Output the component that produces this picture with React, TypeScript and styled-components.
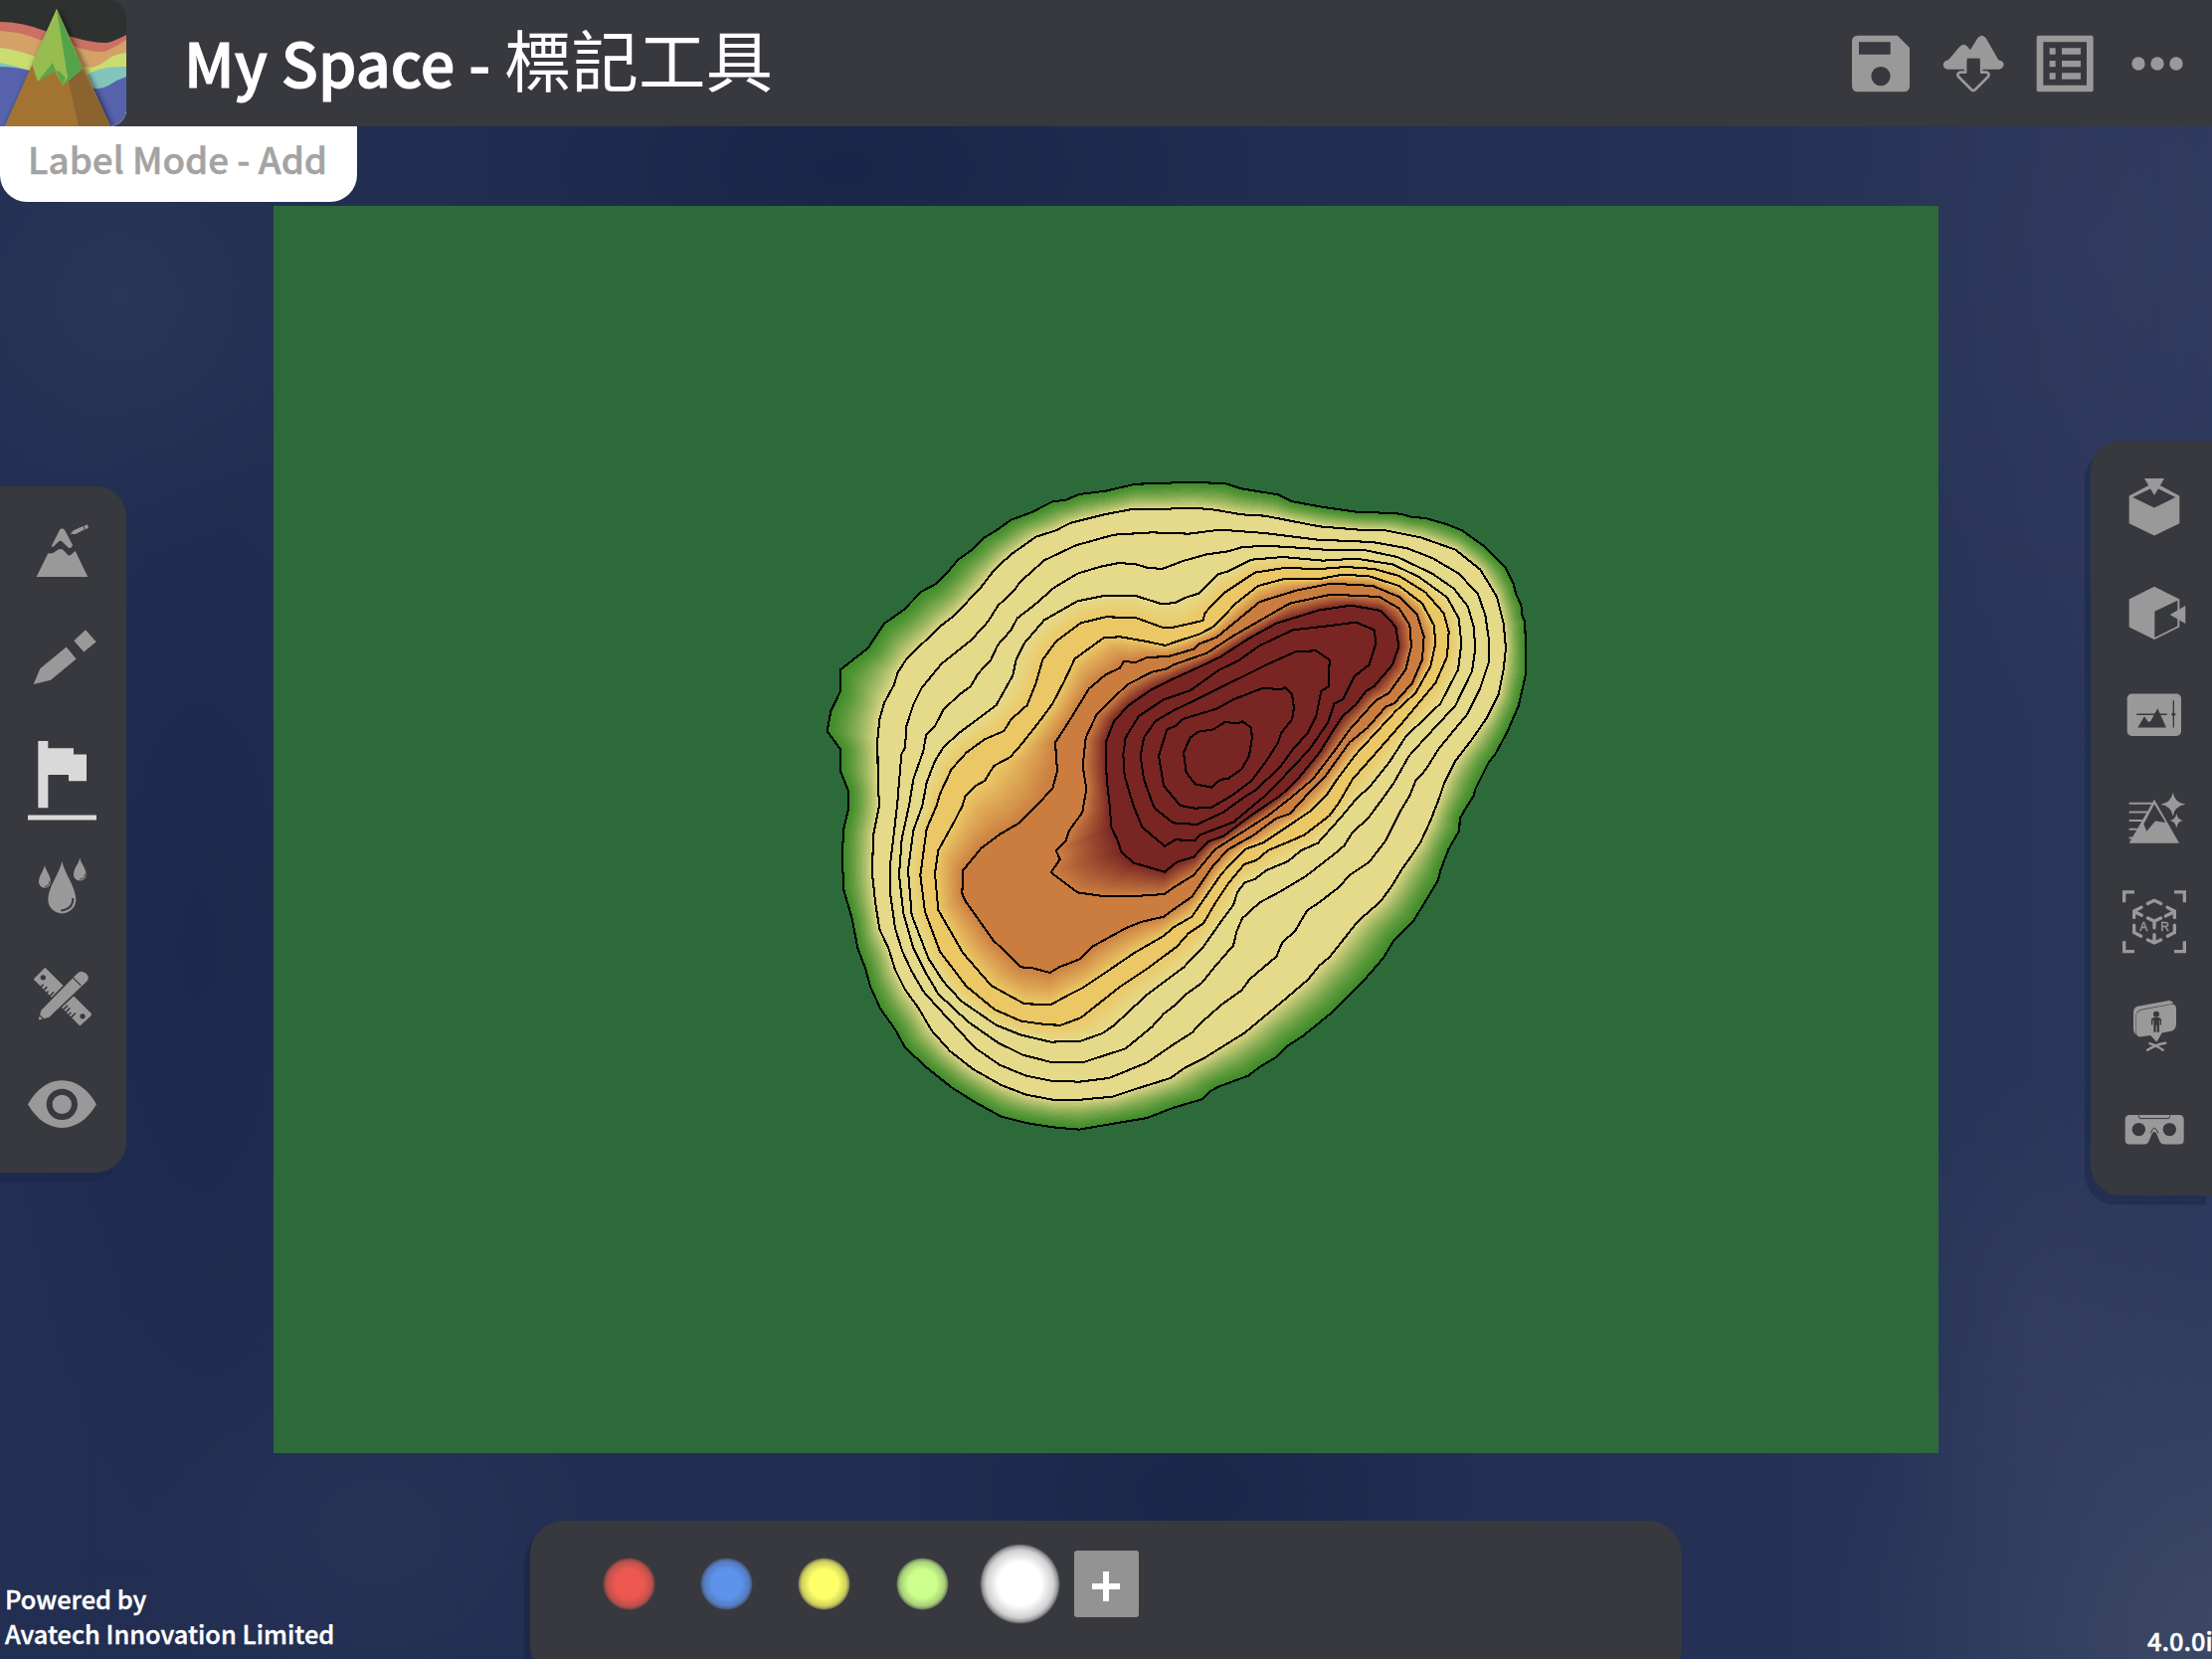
import React from "react";
import styled, { createGlobalStyle, css } from "styled-components";

const Global = createGlobalStyle`
  *, *::before, *::after { box-sizing: border-box; }
  html, body { margin: 0; padding: 0; overflow: hidden; }
  body { font-family: "Noto Sans CJK TC", "Noto Sans CJK SC", "Noto Sans", sans-serif; }
`;

const PANEL = "#38393e";
const ICON = "#999999";

const Screen = styled.div`
  position: relative;
  width: 2224px;
  height: 1668px;
  overflow: hidden;
  display: flex;
  flex-direction: column;
  background:
    radial-gradient(ellipse 200px 240px at 2050px 1320px, rgba(66, 76, 106, 0.3), transparent),
    radial-gradient(ellipse 420px 380px at 2224px 1640px, rgba(72, 84, 108, 0.55), transparent),
    radial-gradient(ellipse 300px 500px at 2120px 250px, rgba(52, 62, 98, 0.5), transparent),
    radial-gradient(ellipse 260px 260px at 120px 300px, rgba(50, 62, 92, 0.5), transparent),
    radial-gradient(ellipse 240px 200px at 380px 1540px, rgba(46, 58, 90, 0.5), transparent),
    radial-gradient(ellipse 200px 600px at 200px 950px, rgba(24, 36, 70, 0.5), transparent),
    radial-gradient(ellipse 420px 220px at 850px 170px, rgba(22, 34, 68, 0.7), transparent),
    radial-gradient(ellipse 300px 180px at 1200px 1500px, rgba(22, 34, 68, 0.6), transparent),
    linear-gradient(90deg, #222e52 0%, #212d50 55%, #263256 85%, #2d395c 100%);
`;

const Header = styled.header`
  flex: none;
  height: 127px;
  display: flex;
  align-items: center;
  background: ${PANEL};
  padding-right: 23px;
`;

const Logo = styled.svg`
  flex: none;
  width: 127px;
  height: 127px;
  border-radius: 0 17px 17px 0;
`;

const Title = styled.h1`
  flex: 1;
  display: flex;
  align-items: baseline;
  margin: 0 0 0 58px;
  font-size: 61px;
  height: 127px;
  line-height: 123px;
  font-weight: 500;
  color: #fff;
  white-space: pre;
  -webkit-text-stroke: 1.1px #fff;
  letter-spacing: 0.1px;
`;

const TitleCjk = styled.span`
  position: relative;
  top: -1px;
  font-size: 67.5px;
  font-weight: 400;
  line-height: 1;
  letter-spacing: 0;
  -webkit-text-stroke: 0;
`;

const Tools = styled.nav`
  display: flex;
  align-items: center;
  gap: 28.6px;
`;

const ToolButton = styled.button`
  border: 0;
  padding: 0;
  background: none;
  width: 64px;
  height: 64px;
  color: ${ICON};
  --hole: ${PANEL};
  svg { display: block; width: 100%; height: 100%; }
`;

const ModeChip = styled.div`
  position: absolute;
  left: 0;
  top: 127px;
  width: 359px;
  height: 76px;
  border-radius: 0 0 27px 27px;
  background: #fff;
  color: #a3a3a3;
  font-size: 36.8px;
  font-weight: 500;
  line-height: 65px;
  padding-left: 28px;
  white-space: nowrap;
  -webkit-text-stroke: 0.5px #a3a3a3;
`;

const Workspace = styled.main`
  flex: 1;
  min-height: 0;
  display: flex;
  justify-content: space-between;
  align-items: flex-start;
`;

const SidePanel = styled.aside<{ $side: "left" | "right" }>`
  flex: none;
  display: flex;
  flex-direction: column;
  background: ${PANEL};
  ${(p) =>
    p.$side === "left"
      ? css`
          width: 127px;
          height: 690px;
          margin-top: 362px;
          padding: 9px 0 0 28px;
          border-radius: 0 31px 31px 0;
          box-shadow: -6px 9px 1px 0 rgba(26, 38, 72, 0.5);
        `
      : css`
          width: 122px;
          height: 759px;
          margin-top: 316px;
          padding: 13.75px 0 0 32px;
          border-radius: 31px 0 0 31px;
          box-shadow: -6px 9px 1px 0 rgba(26, 38, 72, 0.5);
        `}
`;

const PanelItem = styled.button<{ $w: number; $h: number; $active?: boolean }>`
  flex: none;
  border: 0;
  padding: 0;
  background: none;
  width: ${(p) => p.$w}px;
  height: ${(p) => p.$h}px;
  color: ${(p) => (p.$active ? "#d9d9d9" : ICON)};
  --hole: ${PANEL};
  svg { display: block; width: 100%; height: 100%; }
`;

const MapCanvas = styled.section`
  flex: none;
  width: 1674px;
  height: 1254px;
  margin-top: 80px;
  background: #2c6a3a;
  margin-left: 148px;
  margin-right: 153px;
  svg { display: block; width: 1674px; height: 1254px; }
`;

const Palette = styled.div`
  position: absolute;
  left: 533px;
  top: 1529px;
  width: 1158px;
  height: 160px;
  border-radius: 34px;
  background: ${PANEL};
  box-shadow: -6px 9px 1px 0 rgba(26, 36, 66, 0.6);
  display: flex;
  align-items: center;
  padding: 0 0 33px 50px;
`;

const Slot = styled.div`
  width: 98.3px;
  display: flex;
  justify-content: center;
`;

const Swatch = styled.button<{ $c: string; $big?: boolean }>`
  border: 0;
  padding: 0;
  width: ${(p) => (p.$big ? 81 : 53)}px;
  height: ${(p) => (p.$big ? 81 : 53)}px;
  border-radius: 50%;
  flex: none;
  background: radial-gradient(
    circle closest-side,
    ${(p) => p.$c} 0,
    ${(p) => p.$c} 54%,
    color-mix(in srgb, ${(p) => p.$c} 76%, ${PANEL}) 84%,
    color-mix(in srgb, ${(p) => p.$c} 45%, ${PANEL}) 94%,
    ${PANEL} 100%
  );
`;

const AddButton = styled.button`
  flex: none;
  margin-left: 5.5px;
  width: 65px;
  height: 67px;
  border: 0;
  border-radius: 3px;
  padding: 4px 0 0;
  background: #939393;
  display: flex;
  align-items: center;
  justify-content: center;
  svg { width: 28px; height: 30px; display: block; }
`;

const Credits = styled.footer`
  position: absolute;
  left: 5px;
  top: 1590px;
  color: #fff;
  font-size: 25.4px;
  font-weight: 500;
  line-height: 35px;
  white-space: nowrap;
  -webkit-text-stroke: 0.4px #fff;
`;

const Version = styled.div`
  position: absolute;
  left: 2159px;
  top: 1632px;
  color: #fff;
  font-size: 25.4px;
  font-weight: 500;
  line-height: 35px;
  white-space: nowrap;
  -webkit-text-stroke: 0.4px #fff;
`;

/* Contour rings from the shoreline to the summit, in thirds of a pixel. */
const RINGS: string[] = [
  "75,610 158,545 207,471 265,430 320,374 365,350 395,320 430,278 475,246 505,214 545,190 590,158 650,136 715,103 755,98 795,81 875,71 965,50 1050,48 1110,44 1235,48 1285,64 1395,82 1435,102 1520,118 1630,134 1690,136 1765,140 1795,149 1840,153 1900,170 1950,190 2020,240 2080,300 2105,350 2112,380 2128,415 2132,450 2140,465 2143,620 2120,720 2085,800 2050,865 2030,890 1990,970 1985,990 1960,1030 1943,1060 1942,1095 1910,1150 1885,1215 1878,1245 1845,1300 1802,1370 1745,1425 1712,1480 1650,1552 1550,1650 1470,1715 1420,1747 1390,1778 1340,1808 1305,1835 1215,1868 1190,1882 1165,1906 1080,1931 1000,1962 870,1984 795,1997 715,1990 640,1978 560,1958 480,1914 410,1870 335,1810 270,1750 240,1695 195,1632 165,1565 150,1510 127,1450 110,1360 85,1275 80,1170 85,1090 99,1030 99,975 75,915 75,850 35,795 46,735 75,675",
  "192,1020 188,940 187,820 193,760 207,710 237,655 248,618 275,577 375,480 420,445 500,360 540,308 590,262 665,209 725,190 770,167 870,142 960,125 1060,125 1140,122 1205,128 1285,142 1355,146 1520,178 1640,188 1720,190 1825,211 1930,248 2005,308 2055,390 2075,470 2082,545 2075,610 2060,685 2025,755 1980,820 1930,885 1895,955 1882,995 1855,1065 1825,1130 1795,1175 1770,1210 1740,1260 1705,1308 1635,1370 1550,1477 1520,1502 1485,1545 1415,1605 1295,1705 1170,1783 1115,1810 1070,1842 965,1875 895,1898 800,1907 715,1907 635,1892 560,1863 475,1815 405,1760 350,1698 310,1630 270,1575 240,1515 220,1450 193,1393 180,1310 171,1225 174,1110",
  "251,960 259,865 270,845 274,780 295,715 320,665 380,592 470,520 520,465 550,417 600,370 615,347 690,280 785,235 900,203 1015,196 1125,200 1220,188 1355,198 1515,218 1680,225 1785,244 1860,273 1940,320 1998,382 2020,445 2031,520 2030,590 2005,665 1965,745 1880,848 1840,912 1810,945 1792,990 1765,1035 1720,1125 1670,1190 1610,1230 1580,1265 1515,1315 1483,1336 1445,1400 1408,1432 1390,1475 1310,1543 1285,1577 1225,1620 1165,1673 1135,1705 1080,1740 1000,1795 885,1842 795,1853 710,1850 635,1835 555,1802 480,1750 425,1690 365,1625 325,1580 290,1520 262,1460 240,1390 226,1290 226,1190 238,1090 247,1010",
  "282,1020 295,940 325,855 333,808 360,780 385,732 430,688 468,660 490,622 528,582 550,535 590,490 608,455 660,415 720,362 790,320 860,299 915,288 965,292 1000,302 1045,306 1080,293 1105,283 1180,262 1245,253 1285,241 1340,237 1415,239 1535,248 1660,250 1755,270 1860,320 1925,365 1968,420 1985,480 1990,545 1980,615 1930,718 1840,815 1790,870 1745,950 1717,990 1665,1060 1620,1100 1595,1140 1570,1162 1480,1232 1400,1280 1340,1312 1287,1360 1270,1400 1260,1442 1225,1482 1205,1505 1165,1555 1120,1587 1080,1625 1050,1648 1015,1687 935,1753 805,1795 715,1795 625,1772 550,1735 460,1672 370,1588 330,1520 295,1450 265,1345 252,1230 260,1120",
  "322,1020 335,950 360,885 385,845 430,803 545,717 595,627 605,580 630,530 690,460 790,403 875,386 965,387 1045,412 1085,408 1115,393 1155,380 1215,322 1245,313 1315,278 1410,270 1530,281 1630,275 1740,292 1820,330 1905,392 1940,455 1948,530 1938,610 1885,712 1780,812 1730,890 1670,965 1635,995 1585,1055 1515,1133 1465,1155 1425,1188 1360,1215 1325,1242 1295,1252 1273,1280 1260,1320 1230,1360 1170,1445 1110,1508 1080,1530 1000,1590 900,1683 865,1707 800,1730 710,1733 620,1712 545,1682 440,1610 385,1550 340,1480 290,1350 279,1215 295,1095",
  "365,1020 375,985 410,910 455,860 510,820 568,795 590,760 638,717 665,650 685,580 725,525 800,469 875,451 965,453 1045,482 1080,482 1168,462 1175,438 1230,380 1325,317 1420,302 1510,307 1600,300 1685,306 1760,327 1840,377 1895,440 1910,495 1905,570 1870,650 1770,770 1700,850 1620,940 1578,1012 1550,1050 1475,1108 1430,1128 1365,1155 1330,1185 1293,1197 1245,1255 1205,1315 1170,1375 1125,1405 1090,1445 1000,1512 920,1565 800,1660 740,1682 700,1681 620,1670 540,1635 455,1565 375,1460 330,1340 316,1230 335,1090",
  "443,1020 452,990 480,962 510,945 538,900 588,873 625,830 680,760 715,712 750,645 782,577 870,513 920,511 1000,525 1055,537 1080,528 1160,502 1200,480 1270,408 1335,357 1410,337 1515,337 1590,323 1670,328 1760,357 1830,410 1865,475 1870,530 1855,600 1810,680 1750,735 1630,865 1570,945 1540,990 1495,1035 1410,1092 1350,1132 1295,1152 1225,1225 1180,1290 1135,1355 1080,1387 1050,1413 960,1465 865,1530 805,1570 765,1590 710,1620 630,1618 530,1563 445,1465 370,1335 360,1225 370,1155 420,1065",
  "668,1018 715,968 729,915 723,830 765,765 825,667 875,625 918,605 930,585 965,588 1000,573 1065,570 1140,548 1155,533 1210,512 1340,405 1450,371 1555,350 1680,357 1760,390 1815,445 1835,510 1830,580 1800,650 1745,712 1720,722 1665,785 1610,830 1535,935 1500,968 1430,1045 1390,1058 1320,1110 1245,1152 1200,1200 1135,1295 1080,1333 1050,1355 985,1370 935,1390 835,1445 797,1483 735,1507 707,1524 655,1510 620,1507 535,1425 450,1305 442,1285 445,1215 500,1148 555,1107 615,1072",
  "808,1020 817,970 806,900 815,815 848,745 940,655 1015,617 1060,607 1080,595 1180,560 1260,508 1430,410 1555,383 1700,390 1760,425 1792,475 1797,540 1780,610 1730,680 1690,703 1610,792 1565,855 1500,940 1435,995 1365,1050 1295,1095 1205,1152 1140,1230 1080,1267 1052,1287 965,1293 860,1292 790,1282 710,1222 737,1182 725,1155 755,1125 765,1095 805,1040",
  "887,1018 878,940 875,830 900,765 945,717 1010,672 1080,637 1140,610 1220,572 1305,517 1390,470 1520,430 1615,416 1705,432 1750,480 1759,540 1740,595 1685,660 1660,675 1630,715 1590,750 1560,795 1520,860 1450,945 1402,990 1320,1045 1230,1112 1185,1128 1140,1175 1090,1190 1053,1220 960,1193 922,1160 913,1130 892,1085",
  "958,1018 932,930 928,865 935,815 975,750 1050,700 1130,673 1215,612 1275,583 1340,537 1440,490 1545,478 1630,467 1685,490 1690,530 1670,595 1625,630 1590,700 1565,712 1545,770 1490,850 1410,935 1350,995 1260,1070 1160,1108 1145,1125 1085,1123 1053,1142 985,1085",
  "1018,1018 990,940 980,870 990,815 1025,765 1080,733 1165,692 1360,595 1450,555 1510,553 1550,580 1548,660 1525,675 1510,750 1485,800 1440,850 1400,905 1325,975 1295,993 1230,1040 1150,1077 1078,1072 1025,1030",
  "1100,1020 1050,960 1035,870 1060,790 1085,780 1110,758 1210,728 1260,700 1350,665 1405,670 1417,663 1437,685 1443,725 1437,760 1405,800 1395,830 1360,885 1315,945 1255,990 1195,1025 1145,1028",
  "1110,860 1130,815 1155,797 1200,790 1235,768 1275,772 1287,766 1315,785 1316,820 1308,870 1285,910 1245,938 1220,942 1195,965 1145,955 1118,920",
];

type Pt = [number, number];
type Rgb = [number, number, number];

const parse = (s: string): Pt[] => s.split(" ").map((p) => p.split(",").map(Number) as Pt);

const densify = (pts: Pt[], step: number): Pt[] =>
  pts.flatMap((p, i) => {
    const q = pts[(i + 1) % pts.length];
    const n = Math.max(1, Math.round(Math.hypot(q[0] - p[0], q[1] - p[1]) / step));
    return Array.from({ length: n }, (_, k): Pt => [
      p[0] + ((q[0] - p[0]) * k) / n,
      p[1] + ((q[1] - p[1]) * k) / n,
    ]);
  });

const nearest = (p: Pt, pts: Pt[]): Pt =>
  pts.reduce((best, q) =>
    Math.hypot(q[0] - p[0], q[1] - p[1]) < Math.hypot(best[0] - p[0], best[1] - p[1]) ? q : best
  );

const join = (pts: Pt[]) => pts.map((p) => `${p[0].toFixed(1)},${p[1].toFixed(1)}`).join(" ");

const GREEN: Rgb = [64, 140, 43];
const CREAM: Rgb = [229, 217, 138];
const GOLD: Rgb = [235, 199, 101];
const ORANGE: Rgb = [203, 125, 64];
const MAROON: Rgb = [120, 37, 35];

const BANDS: { outer: number; inner: number; from: Rgb; to: Rgb; ease: number }[] = [
  { outer: 0, inner: 1, from: GREEN, to: CREAM, ease: 1.35 },
  { outer: 4, inner: 5, from: CREAM, to: GOLD, ease: 1 },
  { outer: 6, inner: 7, from: GOLD, to: ORANGE, ease: 1 },
  { outer: 8, inner: 9, from: ORANGE, to: MAROON, ease: 1 },
];

const STEPS = 24;

const FILLS = BANDS.flatMap(({ outer, inner, from, to, ease }) => {
  const a = densify(parse(RINGS[outer]), 16);
  const b = densify(parse(RINGS[inner]), 8);
  const target = a.map((p) => nearest(p, b));
  const shades = Array.from({ length: STEPS }, (_, k) => {
    const t = k / STEPS;
    const pts = a.map((p, i): Pt => [
      p[0] + (target[i][0] - p[0]) * t,
      p[1] + (target[i][1] - p[1]) * t,
    ]);
    const c = from.map((v, i) => Math.round(v + (to[i] - v) * Math.pow(t, ease)));
    return { points: join(pts), fill: `rgb(${c.join(",")})` };
  });
  return [...shades, { points: RINGS[inner], fill: `rgb(${to.join(",")})` }];
});

const Terrain = () => (
  <svg viewBox="0 0 1674 1254">
    <g transform="translate(545 263) scale(0.33333)" shapeRendering="crispEdges">
      {FILLS.map((f, i) => (
        <polygon key={i} points={f.points} fill={f.fill} />
      ))}
      {RINGS.map((r, i) => (
        <polygon key={i} points={r} fill="none" stroke="#000" strokeWidth="6.2" strokeLinejoin="round" />
      ))}
    </g>
  </svg>
);

const AppLogo = () => (
  <Logo viewBox="0 0 127 127">
    <defs>
      <filter id="peak" x="-20%" y="-10%" width="150%" height="120%">
        <feDropShadow dx="2" dy="1" stdDeviation="3" floodOpacity="0.6" />
      </filter>
    </defs>
    <rect width="127" height="127" fill="#2f3130" />
    <path d="M0 22 Q22 22 45 31 L72 37 Q92 43 107 43 Q114 42 127 35 V127 H0Z" fill="#cb7062" />
    <path d="M0 31 Q22 32 40 40 L72 45 Q90 53 105 52 Q115 48 127 40 V127 H0Z" fill="#d4a267" />
    <path d="M0 48 Q14 49 36 57 L85 67 Q95 70 105 62 Q114 54 127 53 V127 H0Z" fill="#cbdc70" />
    <path d="M0 63 Q15 66 30 71 L86 77 Q98 66 127 67 V127 H0Z" fill="#83c4bc" />
    <path d="M0 67 Q15 67 30 71 L90 88 Q101 91 109 86 Q118 80 127 77 V127 H0Z" fill="#5663ac" />
    <path d="M57 9 L111 127 H5Z" fill="#a37332" filter="url(#peak)" />
    <path d="M57 9 L82 70 L111 127 H5 L33 64Z" fill="#a37332" />
    <path d="M68 78 L83 69 L111 127 H79Z" fill="#8b632f" />
    <path d="M57 9 L83 69 L63 86 L55 71 L38 82 L32 64Z" fill="#97bc50" />
    <path d="M57 9 L83 69 L63 86 L68 78Z" fill="#54a34b" />
    <path d="M53 63 L38 82 L56 71Z M56 71 L63 86 L66 78 L60 72Z" fill="#54a34b" opacity="0.9" />
  </Logo>
);

const SaveIcon = () => (
  <svg viewBox="57 94 192 192" fill="currentColor">
    <path
      fillRule="evenodd"
      d="M84 105 H203 L240 142 V257 Q240 275 222 275 H84 Q66 275 66 257 V123 Q66 105 84 105Z M87 125 V162 H182 V125Z M153 199 A29 29 0 1 0 153 257 A29 29 0 1 0 153 199Z"
    />
  </svg>
);

const TerrainDownIcon = () => (
  <svg viewBox="334 94 192 192">
    <path
      fill="currentColor"
      d="M339 193 Q341 181 355 179 L388 140 Q400 126 412 138 L421 149 L443 113 Q456 97 468 113 L506 179 Q522 182 522 193 Q520 205 508 207 H352 Q340 205 339 193Z"
    />
    <path
      fill="var(--hole)"
      stroke="currentColor"
      strokeWidth="8"
      strokeLinejoin="round"
      d="M407 176 H454 V216 H469 Q481 219 475 229 L436 268 Q430 274 424 268 L385 229 Q379 219 391 216 H407Z"
    />
    <path fill="var(--hole)" d="M411 174 H450 V222 H411Z" />
  </svg>
);

const ListIcon = () => (
  <svg viewBox="613 94 192 192" fill="currentColor">
    <path
      fillRule="evenodd"
      d="M630 105 H789 Q795 105 795 111 V269 Q795 275 789 275 H630 Q624 275 624 269 V111 Q624 105 630 105Z M644 125 V255 H775 V125Z"
    />
    <path d="M663 143h18v19h-18z M700 143h57v19h-57z M663 181h18v19h-18z M700 181h57v19h-57z M663 218h18v19h-18z M700 218h57v19h-57z" />
  </svg>
);

const DotsIcon = () => (
  <svg viewBox="891 94 192 192" fill="currentColor">
    <circle cx="930" cy="190" r="20" />
    <circle cx="987" cy="190" r="20" />
    <circle cx="1044" cy="190" r="20" />
  </svg>
);

const SculptIcon = () => (
  <svg viewBox="84 54 210 333.6" fill="currentColor">
    <path d="M155 208 L180 158 Q187 149 195 158 L219 204 Q217 214 207 213 L186 192 Q180 190 175 195 L164 206 Q160 211 155 208Z" />
    <path d="M110 300 L145 229 Q158 232 169 222 Q180 212 190 218 L204 233 Q210 238 216 232 L227 222 L265 300Z" />
    <path d="M212 170 L222 160 L250 147 L255 157 L228 171Z M253 147 L263 142 L267 152 L258 157Z" />
  </svg>
);

const PencilIcon = () => (
  <svg viewBox="84 387.6 210 333.6" fill="currentColor">
    <path d="M101 625 L121 577 L200 512 L230 548 L153 612Z M223 493 L258 460 L290 496 L253 527Z" />
  </svg>
);

const FlagIcon = () => (
  <svg viewBox="84 721.2 210 333.6" fill="currentColor">
    <path d="M115 796 H145 V818 H222 V837 H261 V917 H207 V898 H145 V998 H115Z" />
    <path d="M84 1020 H291 V1035 H84Z" />
  </svg>
);

const DropsIcon = () => (
  <svg viewBox="84 4.8 210 333.6" fill="currentColor">
    <path d="M187 107 C195 145 229 185 229 222 A42 42 0 0 1 145 222 C145 185 179 145 187 107Z" />
    <path d="M135 119 C138 136 153 150 153 169 A18 18 0 0 1 117 169 C117 150 132 136 135 119Z" />
    <path d="M241 96 C244 113 260 128 260 147 A19 18 0 0 1 222 147 C222 128 238 113 241 96Z" />
    <g fill="none" stroke="var(--hole)">
      <path d="M220 218 Q220 252 184 255" strokeWidth="6" />
      <path d="M150 166 Q150 181 135 183" strokeWidth="3" />
      <path d="M257 145 Q257 159 241 161" strokeWidth="3" />
    </g>
  </svg>
);

const MeasureIcon = () => (
  <svg viewBox="84 338.4 210 333.6">
    <path fill="currentColor" d="M101 463 L136 428 L275 566 Q277 571 273 575 L241 604Z" />
    <g stroke="var(--hole)" strokeWidth="5">
      <path d="M120 490 L131 479 M129 499 L142 486 M138 507 L146 499 M147 517 L162 502 M190 556 L204 542 M198 563 L211 550 M206 571 L214 563 M214 579 L228 565" />
    </g>
    <g fill="var(--hole)">
      <circle cx="130" cy="458" r="8" />
      <circle cx="249" cy="575" r="8" />
    </g>
    <path
      fill="currentColor"
      stroke="var(--hole)"
      strokeWidth="5"
      d="M112 590 L122 556 L232 443 Q244 431 259 442 Q276 455 264 471 L149 580Z"
    />
    <path fill="none" stroke="var(--hole)" strokeWidth="4" d="M220 458 L244 482 M120 572 L132 584" />
  </svg>
);

const EyeIcon = () => (
  <svg viewBox="84 672 210 333.6">
    <path
      fill="currentColor"
      d="M84 841 Q125 770 187 769 Q250 770 291 841 Q250 911 187 912 Q125 911 84 841Z"
    />
    <circle cx="187" cy="841" r="38" fill="currentColor" stroke="var(--hole)" strokeWidth="18" />
  </svg>
);

const CubeTopIcon = () => (
  <svg viewBox="132 80.25 192 313.5" fill="currentColor">
    <path
      fillRule="evenodd"
      d="M228 164 L304 205 V288 L228 325 L152 288 V205Z M228 178 L163 209 L228 241 L292 209Z"
    />
    <path d="M198 152 H258 L228 203Z" />
  </svg>
);

const CubeSideIcon = () => (
  <svg viewBox="132 393.75 192 313.5" fill="currentColor">
    <path
      fillRule="evenodd"
      d="M228 480 L304 518 V602 L228 640 L152 602 V518Z M229 555 V634 L298 599 V522Z"
    />
    <path d="M275 565 L322 538 V592Z" />
  </svg>
);

const ElevationIcon = () => (
  <svg viewBox="132 707.25 192 313.5">
    <rect x="146" y="802" width="163" height="127" rx="14" fill="currentColor" />
    <path fill="var(--hole)" d="M178 904 L198 870 L210 887 L217 884 L238 846 L264 904Z" />
    <path stroke="var(--hole)" strokeWidth="4" d="M175 864 H266 M280 864 H292 M286 822 V904" />
    <circle cx="286" cy="864" r="5" fill="var(--hole)" />
  </svg>
);

const EnhanceIcon = () => (
  <svg viewBox="132 1020.75 192 313.5">
    <path
      fill="none"
      stroke="currentColor"
      strokeWidth="6"
      d="M152 1134 H222 M152 1160 H208 M152 1186 H194 M152 1212 H176 M152 1238 H166"
    />
    <path fill="currentColor" d="M228 1122 L303 1254 H152Z" />
    <path fill="var(--hole)" d="M228 1136 L262 1192 L231 1187 L205 1218 L196 1196Z" />
    <path
      fill="currentColor"
      d="M284 1101 Q289 1132 322 1137 Q289 1142 284 1173 Q279 1142 247 1137 Q279 1132 284 1101Z M295 1164 Q298 1183 315 1186 Q298 1189 295 1208 Q292 1189 274 1186 Q292 1183 295 1164Z"
    />
  </svg>
);

const ArLetter = styled.text`
  font-family: "Liberation Sans", Arial, sans-serif;
  font-size: 36px;
  fill: currentColor;
  stroke: currentColor;
  stroke-width: 1px;
`;

const ArIcon = () => (
  <svg viewBox="132 164.25 192 313.5">
    <g fill="none" stroke="currentColor" strokeWidth="10" strokeLinecap="round">
      <path
        strokeLinecap="butt"
        d="M137 261 V230 H168 M288 230 H319 V261 M137 378 V409 H168 M288 409 H319 V378"
      />
      <path d="M208 265 L228 255 L248 265" />
      <path d="M167 307 V287 L189 276 M170 290 L190 300 M289 307 V287 L267 276 M286 290 L262 302" />
      <path d="M208 308 L228 318 L248 308 M228 318 V338 M228 358 V380 M208 374 L228 383 L248 374" />
      <path d="M167 330 V352 L188 363 M289 330 V352 L268 363" />
    </g>
    <ArLetter x="184" y="347">A</ArLetter>
    <ArLetter x="247" y="347">R</ArLetter>
  </svg>
);

const MarkerIcon = () => (
  <svg viewBox="132 477.75 192 313.5">
    <path
      fill="currentColor"
      d="M172 662 Q164 655 165 640 V594 Q165 580 178 576 L272 559 Q282 559 285 568 L190 585 Q173 588 172 605Z"
    />
    <path
      fill="currentColor"
      d="M173 606 Q174 591 190 587 L280 570 Q293 569 294 582 V630 Q293 645 282 650 L251 656 L235 684 L217 664 L184 668 Q174 667 173 655Z"
    />
    <g fill="var(--hole)">
      <circle cx="234" cy="600" r="9" />
      <path d="M219 614 L226 610 H242 L249 614 V632 H245 V618 H243 V654 H236 V634 H233 V654 H226 V618 H223 V632 H219Z" />
    </g>
    <path
      fill="none"
      stroke="currentColor"
      strokeWidth="7"
      strokeLinecap="round"
      d="M214 688 Q232 692 254 708 M262 687 Q236 690 207 708"
    />
  </svg>
);

const CardboardIcon = () => (
  <svg viewBox="132 791.25 192 313.5">
    <path
      fill="currentColor"
      d="M154 902 H303 Q317 902 317 916 V978 Q317 991 304 991 H258 Q249 991 245 983 L235 959 Q228 948 221 959 L211 983 Q207 991 198 991 H154 Q140 991 140 978 V916 Q140 902 154 902Z"
    />
    <path fill="none" stroke="var(--hole)" strokeWidth="3" d="M180 903 L184 913 H272 L276 903 M217 958 Q222 942 228 941 Q234 942 240 958" />
    <circle cx="181" cy="946" r="20" fill="var(--hole)" />
    <circle cx="274" cy="946" r="20" fill="var(--hole)" />
  </svg>
);

const HEADER_TOOLS = [SaveIcon, TerrainDownIcon, ListIcon, DotsIcon];
const LEFT_TOOLS = [SculptIcon, PencilIcon, FlagIcon, DropsIcon, MeasureIcon, EyeIcon];
const RIGHT_TOOLS = [
  CubeTopIcon,
  CubeSideIcon,
  ElevationIcon,
  EnhanceIcon,
  ArIcon,
  MarkerIcon,
  CardboardIcon,
];
const COLORS = ["#ec5850", "#5e93ec", "#ffff68", "#ccff8c"];

export default function App() {
  return (
    <Screen>
      <Global />
      <Header>
        <AppLogo />
        <Title>
          My Space - <TitleCjk>標記工具</TitleCjk>
        </Title>
        <Tools>
          {HEADER_TOOLS.map((Icon, i) => (
            <ToolButton key={i}>
              <Icon />
            </ToolButton>
          ))}
        </Tools>
      </Header>
      <Workspace>
        <SidePanel $side="left">
          {LEFT_TOOLS.map((Icon, i) => (
            <PanelItem key={i} $w={70} $h={111.2} $active={i === 2}>
              <Icon />
            </PanelItem>
          ))}
        </SidePanel>
        <MapCanvas>
          <Terrain />
        </MapCanvas>
        <SidePanel $side="right">
          {RIGHT_TOOLS.map((Icon, i) => (
            <PanelItem key={i} $w={64} $h={104.5}>
              <Icon />
            </PanelItem>
          ))}
        </SidePanel>
      </Workspace>
      <ModeChip>Label Mode - Add</ModeChip>
      <Palette>
        {COLORS.map((c) => (
          <Slot key={c}>
            <Swatch $c={c} />
          </Slot>
        ))}
        <Slot>
          <Swatch $c="#ffffff" $big />
        </Slot>
        <AddButton>
          <svg viewBox="0 0 28 30">
            <path d="M11 0h6v12h11v6H17v12h-6V18H0v-6h11z" fill="#fff" />
          </svg>
        </AddButton>
      </Palette>
      <Credits>
        Powered by
        <br />
        Avatech Innovation Limited
      </Credits>
      <Version>4.0.0i</Version>
    </Screen>
  );
}
